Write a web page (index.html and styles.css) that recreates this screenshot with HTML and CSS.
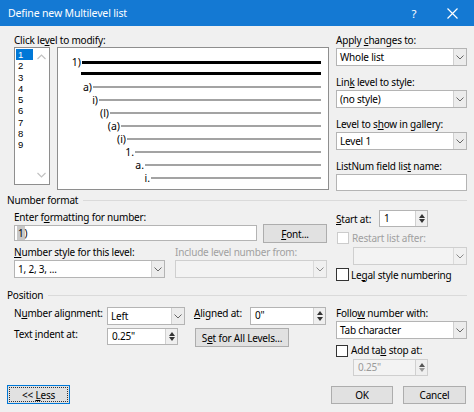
FILE: index.html
```html
<!DOCTYPE html>
<html>
<head>
<meta charset="utf-8">
<link rel="stylesheet" href="styles.css">
</head>
<body>
<div class="window">
  <div class="titlebar">
    <span class="title">Define new Multilevel list</span>
    <span class="tb-help">?</span>
    <span class="tb-close"><svg width="11" height="11" viewBox="0 0 11 11"><path d="M0.5 0.5 L10.5 10.5 M10.5 0.5 L0.5 10.5" stroke="#fff" stroke-width="1.2" fill="none"/></svg></span>
  </div>
  <div class="content">
    <div class="top">
      <div class="top-left">
        <div class="lbl">Click le<u>v</u>el to modify:</div>
        <div class="top-left-row">
          <div class="listbox">
            <div class="items">
              <div class="item sel">1</div>
              <div class="item">2</div>
              <div class="item">3</div>
              <div class="item">4</div>
              <div class="item">5</div>
              <div class="item">6</div>
              <div class="item">7</div>
              <div class="item">8</div>
              <div class="item">9</div>
            </div>
            <div class="vscroll">
              <svg width="9" height="6" viewBox="0 0 9 6"><path d="M0.5 5 L4.5 1 L8.5 5" stroke="#c2c2c2" stroke-width="1.2" fill="none"/></svg>
              <svg width="9" height="6" viewBox="0 0 9 6"><path d="M0.5 1 L4.5 5 L8.5 1" stroke="#c2c2c2" stroke-width="1.2" fill="none"/></svg>
            </div>
          </div>
          <div class="preview">
            <div class="pv-row r1 p1"><span class="pv-lbl">1)</span><span class="pv-line dark"></span></div>
            <div class="pv-row r2 p2"><span class="pv-lbl"></span><span class="pv-line dark"></span></div>
            <div class="pv-row p3"><span class="pv-lbl">a)</span><span class="pv-line"></span></div>
            <div class="pv-row p4"><span class="pv-lbl">i)</span><span class="pv-line"></span></div>
            <div class="pv-row p5"><span class="pv-lbl">(l)</span><span class="pv-line"></span></div>
            <div class="pv-row p6"><span class="pv-lbl">(a)</span><span class="pv-line"></span></div>
            <div class="pv-row p7"><span class="pv-lbl">(i)</span><span class="pv-line"></span></div>
            <div class="pv-row p8"><span class="pv-lbl">1.</span><span class="pv-line"></span></div>
            <div class="pv-row p9"><span class="pv-lbl">a.</span><span class="pv-line"></span></div>
            <div class="pv-row p10"><span class="pv-lbl">i.</span><span class="pv-line"></span></div>
          </div>
        </div>
      </div>
      <div class="top-right">
        <div class="field first">
          <div class="lbl">Apply <u>c</u>hanges to:</div>
          <div class="combo"><span class="val">Whole list</span><span class="arrow"><svg width="8" height="5" viewBox="0 0 8 5"><path d="M0.5 0.5 L4 4 L7.5 0.5" stroke="#666" stroke-width="1" fill="none"/></svg></span></div>
        </div>
        <div class="field">
          <div class="lbl">Lin<u>k</u> level to style:</div>
          <div class="combo"><span class="val">(no style)</span><span class="arrow"><svg width="8" height="5" viewBox="0 0 8 5"><path d="M0.5 0.5 L4 4 L7.5 0.5" stroke="#666" stroke-width="1" fill="none"/></svg></span></div>
        </div>
        <div class="field">
          <div class="lbl">Level to s<u>h</u>ow in gallery:</div>
          <div class="combo"><span class="val">Level 1</span><span class="arrow"><svg width="8" height="5" viewBox="0 0 8 5"><path d="M0.5 0.5 L4 4 L7.5 0.5" stroke="#666" stroke-width="1" fill="none"/></svg></span></div>
        </div>
        <div class="field">
          <div class="lbl">ListNum field lis<u>t</u> name:</div>
          <div class="textbox"></div>
        </div>
      </div>
    </div>

    <div class="group-head"><span class="gh-text">Number format</span><span class="gh-rule"></span></div>
    <div class="nf">
      <div class="nf-left">
        <div class="lbl">Enter f<u>o</u>rmatting for number:</div>
        <div class="nf-row">
          <div class="textbox fmt"><span class="shade">1</span>)</div>
          <div class="btn font-btn"><span><u>F</u>ont...</span></div>
        </div>
        <div class="nf-cols">
          <div class="nf-col c1">
            <div class="lbl"><u>N</u>umber style for this level:</div>
            <div class="combo"><span class="val">1, 2, 3, ...</span><span class="arrow"><svg width="8" height="5" viewBox="0 0 8 5"><path d="M0.5 0.5 L4 4 L7.5 0.5" stroke="#666" stroke-width="1" fill="none"/></svg></span></div>
          </div>
          <div class="nf-col c2">
            <div class="lbl disabled">Include level number from:</div>
            <div class="combo dis"><span class="val"></span><span class="arrow"><svg width="8" height="5" viewBox="0 0 8 5"><path d="M0.5 0.5 L4 4 L7.5 0.5" stroke="#8a8a8a" stroke-width="1" fill="none"/></svg></span></div>
          </div>
        </div>
      </div>
      <div class="nf-right">
        <div class="start-row">
          <span class="lbl start-lbl"><u>S</u>tart at:</span>
          <div class="spin start-spin"><span class="val">1</span><span class="spin-btns"><svg width="6" height="4" viewBox="0 0 6 4"><path d="M0 4 L3 0 L6 4 Z" fill="#333"/></svg><svg width="6" height="4" viewBox="0 0 6 4"><path d="M0 0 L3 4 L6 0 Z" fill="#333"/></svg></span></div>
        </div>
        <div class="chk-row restart">
          <span class="chk dis"></span><span class="lbl disabled">Restart list after:</span>
        </div>
        <div class="combo dis restart-combo"><span class="val"></span><span class="arrow"><svg width="8" height="5" viewBox="0 0 8 5"><path d="M0.5 0.5 L4 4 L7.5 0.5" stroke="#8a8a8a" stroke-width="1" fill="none"/></svg></span></div>
        <div class="chk-row legal">
          <span class="chk"></span><span class="lbl">Le<u>g</u>al style numbering</span>
        </div>
      </div>
    </div>

    <div class="group-head pos-head"><span class="gh-text">Position</span><span class="gh-rule"></span></div>
    <div class="pos">
      <div class="pos-left">
        <span class="lbl pl">N<u>u</u>mber alignment:</span>
        <div class="combo align-combo"><span class="val">Left</span><span class="arrow"><svg width="8" height="5" viewBox="0 0 8 5"><path d="M0.5 0.5 L4 4 L7.5 0.5" stroke="#666" stroke-width="1" fill="none"/></svg></span></div>
        <span class="lbl pl"><u>A</u>ligned at:</span>
        <div class="spin aligned-spin"><span class="val">0"</span><span class="spin-btns"><svg width="6" height="4" viewBox="0 0 6 4"><path d="M0 4 L3 0 L6 4 Z" fill="#333"/></svg><svg width="6" height="4" viewBox="0 0 6 4"><path d="M0 0 L3 4 L6 0 Z" fill="#333"/></svg></span></div>
        <span class="lbl pl">Text <u>i</u>ndent at:</span>
        <div class="spin indent-spin"><span class="val">0.25"</span><span class="spin-btns"><svg width="6" height="4" viewBox="0 0 6 4"><path d="M0 4 L3 0 L6 4 Z" fill="#333"/></svg><svg width="6" height="4" viewBox="0 0 6 4"><path d="M0 0 L3 4 L6 0 Z" fill="#333"/></svg></span></div>
        <div class="btn setall-btn"><span>S<u>e</u>t for All Levels...</span></div>
      </div>
      <div class="pos-right">
        <div class="lbl">Follo<u>w</u> number with:</div>
        <div class="combo"><span class="val">Tab character</span><span class="arrow"><svg width="8" height="5" viewBox="0 0 8 5"><path d="M0.5 0.5 L4 4 L7.5 0.5" stroke="#666" stroke-width="1" fill="none"/></svg></span></div>
        <div class="chk-row tabstop">
          <span class="chk"></span><span class="lbl">Add ta<u>b</u> stop at:</span>
        </div>
        <div class="spin dis tab-spin"><span class="val">0.25"</span><span class="spin-btns"><svg width="6" height="4" viewBox="0 0 6 4"><path d="M0 4 L3 0 L6 4 Z" fill="#555"/></svg><svg width="6" height="4" viewBox="0 0 6 4"><path d="M0 0 L3 4 L6 0 Z" fill="#999"/></svg></span></div>
      </div>
    </div>

    <div class="footer">
      <div class="btn less-btn"><span class="focus"><span>&lt;&lt; <u>L</u>ess</span></span></div>
      <div class="ok-cancel">
        <div class="btn ok-btn">OK</div>
        <div class="btn cancel-btn">Cancel</div>
      </div>
    </div>
  </div>
</div>
</body>
</html>
```

FILE: styles.css
```css
* { box-sizing: border-box; }
html, body { margin: 0; padding: 0; }
body {
  width: 474px;
  height: 412px;
  overflow: hidden;
  background: #f0f0f0;
  font-family: "Noto Sans", "Open Sans", sans-serif;
  font-size: 10px;
  letter-spacing: -0.2px;
  color: #000;
}
u { text-decoration: underline; text-underline-offset: 1px; }

.window {
  width: 474px;
  height: 412px;
  background: #f0f0f0;
}

.titlebar {
  height: 26px;
  background: #1479d3;
  color: #fff;
  display: flex;
  align-items: center;
  padding-left: 8px;
  padding-right: 16px;
}
.title { font-size: 10.5px; flex: 1; letter-spacing: -0.15px; }
.tb-help { font-size: 11.5px; width: 10px; margin-right: 28px; text-align: center; }
.tb-close { width: 11px; height: 11px; display: flex; flex: none; }

.content { padding: 7px 7px 0 7px; }

.lbl { line-height: 14px; height: 14px; white-space: nowrap; }
.disabled { color: #a0a0a0; }

/* ---------- top ---------- */
.top { display: flex; padding-left: 7px; gap: 7px; }
.top-left { width: 315px; }
.top-left-row { display: flex; gap: 7px; align-items: flex-start; }

.listbox {
  width: 36px;
  height: 138px;
  background: #fff;
  border: 1px solid #8e8e8e;
  display: flex;
}
.items { width: 18px; padding-top: 1px; padding-left: 1px; }
.item {
  line-height: 11.25px;
  height: 11.25px;
  padding-left: 2px;
  font-family: "Liberation Sans", "Noto Sans", sans-serif;
  font-size: 9.5px;
  letter-spacing: 0;
}
.item.sel { background: #0078d7; color: #fff; }
.vscroll {
  flex: 1;
  display: flex;
  flex-direction: column;
  justify-content: space-between;
  align-items: center;
  padding: 6px 0 6px 0;
}

.preview {
  flex: 1;
  height: 143px;
  background: #fff;
  border: 1px solid #8e8e8e;
  padding: 8px 7px 0 0;
}
.pv-row { display: flex; align-items: center; height: 13px; }
.pv-row.r1 { height: 12px; }
.pv-row.r2 { height: 10px; margin-bottom: 2px; }
.pv-lbl { width: 20px; text-align: right; padding-right: 1px; font-size: 10.5px; line-height: 12px; letter-spacing: 0; }
.pv-line { flex: 1; height: 2px; background: #a3a3a3; }
.pv-line.dark { height: 3px; background: #000; }
.p1 { padding-left: 4px; }
.p2 { padding-left: 3px; }
.p3 { padding-left: 15px; }
.p4 { padding-left: 21px; }
.p5 { padding-left: 32px; }
.p6 { padding-left: 43px; }
.p7 { padding-left: 49px; }
.p8 { padding-left: 57px; }
.p9 { padding-left: 67px; }
.p10 { padding-left: 73px; }

.top-right { width: 131px; }
.field { margin-top: 9px; }
.field.first { margin-top: 0; }
.field .lbl { margin-bottom: 1px; }

.combo {
  height: 18px;
  background: #fff;
  border: 1px solid #b4b4b4;
  display: flex;
  align-items: stretch;
}
.combo .val { flex: 1; padding-left: 3px; line-height: 16px; white-space: nowrap; overflow: hidden; }
.combo .arrow {
  width: 13px;
  background: #ececec;
  border-left: 1px solid #d0d0d0;
  display: flex;
  align-items: center;
  justify-content: center;
}
.combo.dis { background: #f3f3f3; border-color: #cfcfcf; }
.combo.dis .arrow { background: #f0f0f0; border-left-color: #dadada; }

.textbox {
  height: 17px;
  background: #fff;
  border: 1px solid #b4b4b4;
  line-height: 15px;
  padding-left: 2px;
}

/* ---------- group heads ---------- */
.group-head { display: flex; align-items: center; height: 14px; margin-top: 2px; }
.gh-text { line-height: 14px; white-space: nowrap; padding-right: 5px; }
.gh-rule { flex: 1; height: 1px; background: #dadada; }
.pos-head { margin-top: 7px; }

/* ---------- number format ---------- */
.nf { display: flex; padding-left: 7px; gap: 9px; }
.nf-left { width: 313px; padding-top: 3px; }
.nf-row { display: flex; gap: 6px; align-items: flex-start; }
.textbox.fmt { width: 243px; margin-top: 1px; height: 16px; line-height: 14px; }
.shade { background: #c8c8c8; padding: 0 1px; }
.btn {
  background: #e1e1e1;
  border: 1px solid #adadad;
  display: flex;
  align-items: center;
  justify-content: center;
  white-space: nowrap;
}
.font-btn { width: 64px; height: 19px; }
.nf-cols { display: flex; gap: 10px; margin-top: 2px; }
.nf-col.c1 { width: 151px; }
.nf-col.c2 { width: 152px; }
.nf-col .lbl { margin-bottom: 1px; }

.nf-right { width: 131px; padding-top: 3px; }
.start-row { display: flex; align-items: center; height: 17px; }
.start-lbl { width: 43px; }
.spin {
  height: 17px;
  background: #fff;
  border: 1px solid #b4b4b4;
  display: flex;
}
.spin .val { flex: 1; padding-left: 4px; line-height: 15px; white-space: nowrap; }
.spin-btns {
  width: 12px;
  background: #efefef;
  border-left: 1px solid #d0d0d0;
  display: flex;
  flex-direction: column;
  justify-content: space-around;
  align-items: center;
  padding: 2px 0;
}
.start-spin { width: 49px; }
.spin.dis { background: #f3f3f3; border-color: #cfcfcf; color: #9a9a9a; }

.chk-row { display: flex; align-items: center; }
.chk {
  width: 13px;
  height: 13px;
  background: #fff;
  border: 1px solid #333;
  margin-right: 2px;
  flex: none;
}
.chk.dis { border-color: #cccccc; }
.restart { margin-top: 5px; height: 12px; padding-left: 1px; }
.restart .chk { width: 12px; height: 12px; margin-right: 3px; }
.restart-combo { margin-top: 3px; margin-left: 17px; }
.legal { margin-top: 3px; height: 13px; }

/* ---------- position ---------- */
.pos { display: flex; padding-left: 7px; gap: 10px; }
.pos-left {
  width: 312px;
  padding-top: 5px;
  display: grid;
  grid-template-columns: 93px 87px 56px 76px;
  grid-template-rows: 18px 19px;
  row-gap: 3px;
  align-items: start;
}
.pl { margin-top: -1px; }
.align-combo { width: 78px; }
.aligned-spin { width: 76px; height: 18px; }
.indent-spin { width: 71px; }
.setall-btn { grid-column: 3 / span 2; width: 94px; height: 19px; margin-left: 1px; }

.pos-right { width: 131px; padding-top: 4px; }
.pos-right .lbl { margin-bottom: 1px; }
.tabstop { margin-top: 5px; height: 13px; }
.tabstop .chk { width: 12px; height: 12px; margin-right: 3px; }
.tab-spin { width: 75px; margin-left: 17px; margin-top: 2px; }

/* ---------- footer ---------- */
.footer { display: flex; justify-content: space-between; margin-top: 9px; }
.less-btn { width: 63px; height: 19px; border: 1px solid #0078d7; padding: 1px; }
.less-btn .focus {
  display: flex;
  align-items: center;
  justify-content: center;
  width: 100%;
  height: 100%;
  border: 1px dotted #333;
}
.ok-cancel { display: flex; gap: 10px; margin-right: 1px; margin-top: 1px; }
.ok-btn { width: 62px; height: 18px; }
.cancel-btn { width: 63px; height: 18px; }
```
